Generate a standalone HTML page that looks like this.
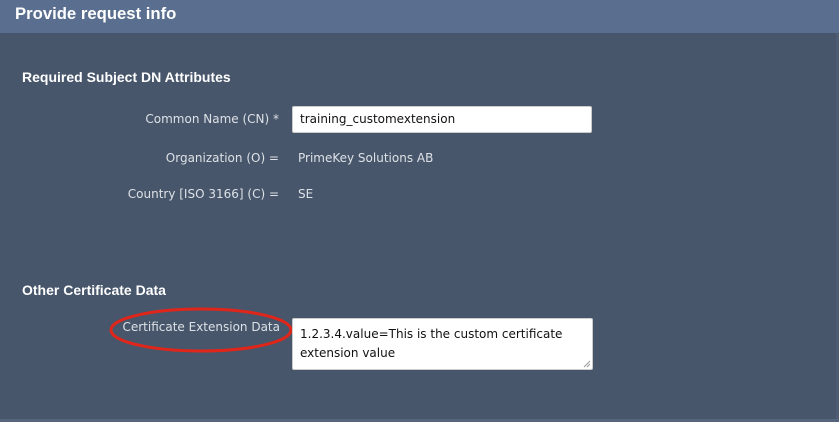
<!DOCTYPE html>
<html><head><meta charset="utf-8"><style>
html,body{margin:0;padding:0;width:839px;height:422px;overflow:hidden;background:#47566b;}
body{position:relative;font-family:"DejaVu Sans",sans-serif;}
.hdr{position:absolute;left:0;top:0;width:839px;height:33px;background:#5a6f8f;}
.hdr span{position:absolute;left:15px;top:4px;font:bold 16.7px "Liberation Sans",sans-serif;color:#fff;}
.side{position:absolute;right:0;top:33px;width:3px;height:389px;background:#4e5d74;}
.bot{position:absolute;left:0;top:419px;width:839px;height:3px;background:#56657c;}
.h2{position:absolute;left:22px;font:bold 14px "Liberation Sans",sans-serif;color:#fff;}
.lbl{position:absolute;right:560px;font-size:12px;color:#dde1e6;white-space:nowrap;}
.val{position:absolute;left:298px;font-size:12px;color:#dde1e6;}
.inp{position:absolute;left:292px;background:#fff;border:1px solid #ccc;border-radius:2px;box-sizing:border-box;font-size:12px;color:#111;padding-left:7px;}
</style></head><body>
<div class="hdr"><span>Provide request info</span></div>
<div class="h2" style="top:69px">Required Subject DN Attributes</div>
<div class="lbl" style="top:112px">Common Name (CN) *</div>
<div class="inp" style="top:106px;width:300px;height:27px;line-height:25px">training_customextension</div>
<div class="lbl" style="top:151px">Organization (O) =</div>
<div class="val" style="top:151px">PrimeKey Solutions AB</div>
<div class="lbl" style="top:187px">Country [ISO 3166] (C) =</div>
<div class="val" style="top:187px">SE</div>
<div class="h2" style="top:282px">Other Certificate Data</div>
<div class="lbl" style="top:320px;right:559px">Certificate Extension Data</div>
<svg style="position:absolute;left:108px;top:306px" width="186" height="48"><ellipse cx="93" cy="24" rx="90" ry="21" fill="none" stroke="#e0261a" stroke-width="3"/></svg>
<div class="inp" style="top:318px;width:301px;height:52px;padding-top:6px;line-height:19px">1.2.3.4.value=This is the custom certificate<br>extension value
<svg style="position:absolute;right:1px;bottom:1px" width="8" height="8"><path d="M7 1L1 7M7 4L4 7" stroke="#999" stroke-width="1"/></svg></div>
<div class="side"></div>
<div class="bot"></div>
</body></html>
